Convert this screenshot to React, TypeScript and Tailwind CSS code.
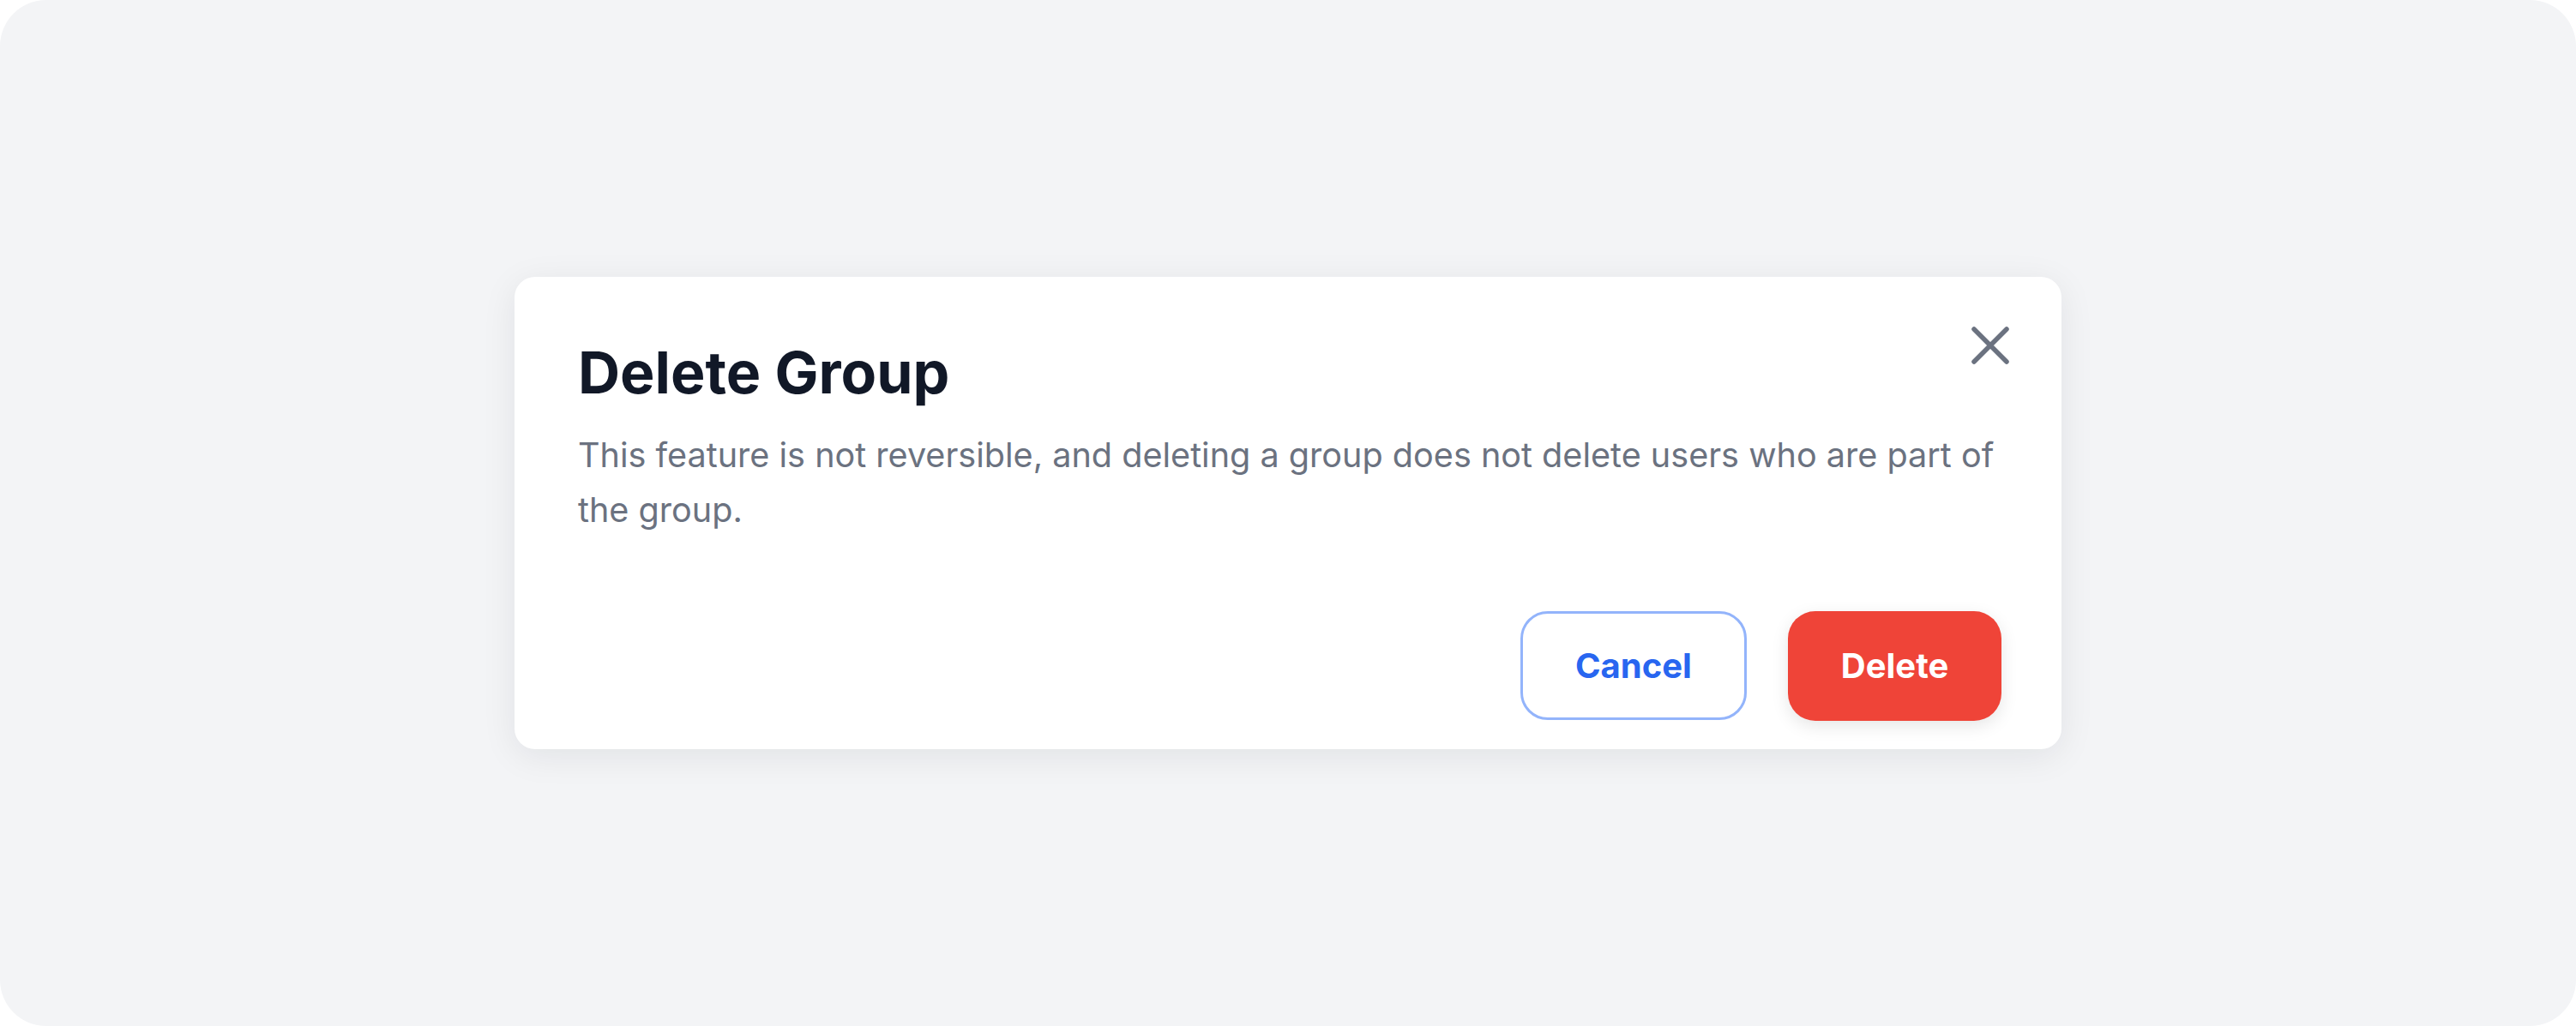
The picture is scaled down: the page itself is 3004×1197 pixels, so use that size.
export default function App() {
  return (
    <div className="h-[1197px] w-[3004px] bg-white">
      <div className="flex h-full w-full items-center justify-center rounded-[54px] bg-[#f3f4f6] font-['Inter',sans-serif]">
        <div className="relative w-[1804px] rounded-[24px] bg-white pb-[33px] pl-[74px] pr-[60px] pt-[70px] shadow-[0_8px_40px_rgba(17,24,39,0.08)]">
          <button className="absolute right-[60px] top-[57px] text-[#6b7280]" aria-label="Close">
            <svg width="46" height="46" viewBox="0 0 46 46" fill="none" stroke="currentColor" strokeWidth="5.5" strokeLinecap="round">
              <path d="M4 4L42 42M42 4L4 42" />
            </svg>
          </button>

          <h2 className="text-[68px] font-bold leading-[82px] text-[#111827]">Delete Group</h2>
          <p className="mt-[24px] text-[39.6px] leading-[64px] text-[#6b7280]">
            This feature is not reversible, and deleting a group does not delete users who are part of the group.
          </p>

          <div className="mt-[86px] flex justify-end gap-[48px] pr-[10px]">
            <button className="h-[127px] w-[264px] rounded-[32px] border-[3px] border-[#93b4fb] bg-white text-[40px] font-bold text-[#2866f0]">
              Cancel
            </button>
            <button className="h-[128px] w-[249px] rounded-[32px] bg-[#ef4438] text-[40px] font-bold text-white shadow-[0_6px_20px_rgba(0,0,0,0.1)]">
              Delete
            </button>
          </div>
        </div>
      </div>
    </div>
  );
}
